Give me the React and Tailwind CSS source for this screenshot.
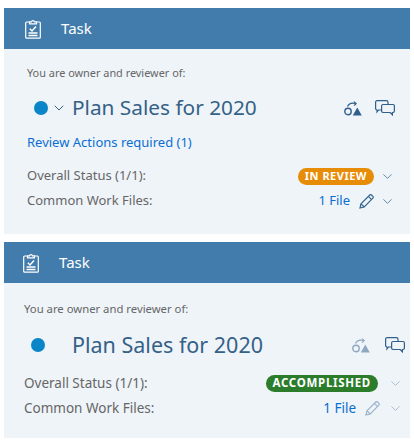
import React from 'react';
import { ChevronDown } from 'lucide-react';

const ClipboardIcon = () => (
  <svg width="16" height="20" viewBox="0 0 16 20" fill="none" stroke="white" strokeWidth="1.2">
    <path d="M4.5 3H1.6C1 3 .7 3.4.7 4v14.2c0 .6.4 1 1 1h12.6c.6 0 1-.4 1-1V4c0-.6-.3-1-.9-1h-2.9" />
    <path d="M4.5 4.8V2.9h2c.2-1.6 2.8-1.6 3 0h2v1.9z" />
    <path d="M4.8 9.8l2.2 2.2 4-4.4" strokeWidth="1.5" />
    <path d="M3.5 14h9M3.5 16.6h9" strokeWidth="1.5" />
  </svg>
);

const ShapesIcon = ({ muted }) => (
  <svg width="18" height="15" viewBox="0 0 18 15" fill="none" className={muted ? 'opacity-50' : ''}>
    <circle cx="4" cy="10.5" r="3.2" stroke="#2f5f8a" strokeWidth="1.4" />
    <path d="M8.8 14.5l4.500-8 4.500 8z" fill="#2f5f8a" />
    <path d="M3.5 5.500C5 2.500 8 1.800 11 2.500" stroke="#2f5f8a" strokeWidth="1.2" />
    <path d="M9.8.6l2.400 1.900-2 2.200" stroke="#2f5f8a" strokeWidth="1.2" />
  </svg>
);

const ChatIcon = () => (
  <svg width="20" height="16" viewBox="0 0 20 16" fill="none" stroke="#2f5f8a" strokeWidth="1.2">
    <path d="M6 10H3.500L2 12V10C1 10 .6 9.400.6 8.600V2.200C.6 1.300 1.200.7 2 .7h9.500c.9 0 1.500.6 1.500 1.500V4" />
    <path d="M8 4.500h10c.8 0 1.400.6 1.400 1.400v5.200c0 .8-.6 1.400-1.400 1.400h-.6v2.300l-2.200-2.300H8c-.8 0-1.400-.6-1.400-1.400V5.900c0-.8.6-1.400 1.400-1.400z" />
  </svg>
);

const PencilIcon = ({ muted }) => (
  <svg width="15" height="15" viewBox="0 0 15 15" fill="none" stroke={muted ? '#9db5cc' : '#33658f'} strokeWidth="1.2">
    <path d="M1 14l1-4.200L10.800 1c.5-.5 1.200-.5 1.700 0l1.400 1.400c.5.5.5 1.200 0 1.700L5.200 13z" />
    <path d="M2 9.800L5.200 13M9.400 2.400l3.200 3.200" />
  </svg>
);

const Card = ({ c, chevron, link, badge, muted }) => (
  <div className={`bg-[#eff4f9] ${c.height}`}>
    <div className={`h-[41px] bg-[#427cac] flex items-center ${c.headerPad}`}>
      <ClipboardIcon />
      <span className="text-[15px] text-white ml-[20px]">Task</span>
    </div>
    <div className={c.body}>
      <div className={`h-[18px] flex items-center text-[#666666] ${c.small}`}>You are owner and reviewer of:</div>
      <div className={`h-[36px] flex items-center ${c.titleTop}`}>
        <div className="w-[14px] h-[14px] rounded-full bg-[#0a86c8] ml-[7px]" />
        <div className={c.titleGap}>
          {chevron && <ChevronDown size={16} strokeWidth={1.5} className="text-[#33658f]" />}
        </div>
        <span className={`text-[#346187] whitespace-nowrap ${c.title}`}>Plan Sales for 2020</span>
        <div className={`ml-auto flex items-center ${c.icons}`}>
          <ShapesIcon muted={muted} />
          <ChatIcon />
        </div>
      </div>
      {link && <div className="h-[20px] mt-[7px] flex items-center text-[13px] text-[#0a6ed1]">Review Actions required (1)</div>}
      <div className={`h-[24px] flex items-center ${link ? 'mt-[11px]' : 'mt-[8px]'}`}>
        <span className={`text-[#666666] ${c.label}`}>Overall Status (1/1):</span>
        <span className={`ml-auto h-[17px] rounded-full flex items-center font-bold text-white ${c.badge}`}>{badge}</span>
        <ChevronDown size={15} strokeWidth={1.2} className={`${c.chevronGap} ${muted ? 'text-[#8fabc4]' : 'text-[#33658f]'}`} />
      </div>
      <div className="h-[24px] mt-[1px] flex items-center justify-end">
        <span className={`text-[#666666] mr-auto ${c.label}`}>Common Work Files:</span>
        <span className={`text-[#0a6ed1] mr-[9px] ${c.label}`}>1 File</span>
        <PencilIcon muted={muted} />
        <ChevronDown size={15} strokeWidth={1.2} className={`${c.fileChevronGap} ${muted ? 'text-[#8fabc4]' : 'text-[#33658f]'}`} />
      </div>
    </div>
  </div>
);

const first = {
  height: 'h-[226px]',
  headerPad: 'pl-[21px]',
  body: 'pt-[15px] pl-[23px] pr-[15px]',
  small: 'text-[10.9px]',
  titleTop: 'mt-[8px]',
  titleGap: 'w-[16px] ml-[3px] mr-[5px] flex items-center',
  title: 'text-[20.8px]',
  icons: 'gap-[13px]',
  label: 'text-[13px]',
  badge: 'px-[7px] text-[11px] tracking-[.5px] bg-[#e78c07]',
  chevronGap: 'ml-[6px]',
  fileChevronGap: 'ml-[6px]',
};

const second = {
  height: 'h-[196px]',
  headerPad: 'pl-[19px]',
  body: 'pt-[17px] pl-[20px] pr-[7px]',
  small: 'text-[11.3px]',
  titleTop: 'mt-[9px]',
  titleGap: 'w-[16px] ml-[4px] mr-[7px]',
  title: 'text-[21.5px]',
  icons: 'gap-[15px] mr-[-2px]',
  label: 'text-[13.5px]',
  badge: 'px-[7px] text-[11.5px] tracking-[.7px] bg-[#2b7d2b]',
  chevronGap: 'ml-[10px]',
  fileChevronGap: 'ml-[8px]',
};

export default function App() {
  return (
    <div className="w-[414px] h-[445px] bg-white pt-[8px] px-[4px] flex flex-col gap-[8px] overflow-hidden font-['Noto_Sans',sans-serif]">
      <Card c={first} chevron link badge="IN REVIEW" />
      <Card c={second} muted badge="ACCOMPLISHED" />
    </div>
  );
}
